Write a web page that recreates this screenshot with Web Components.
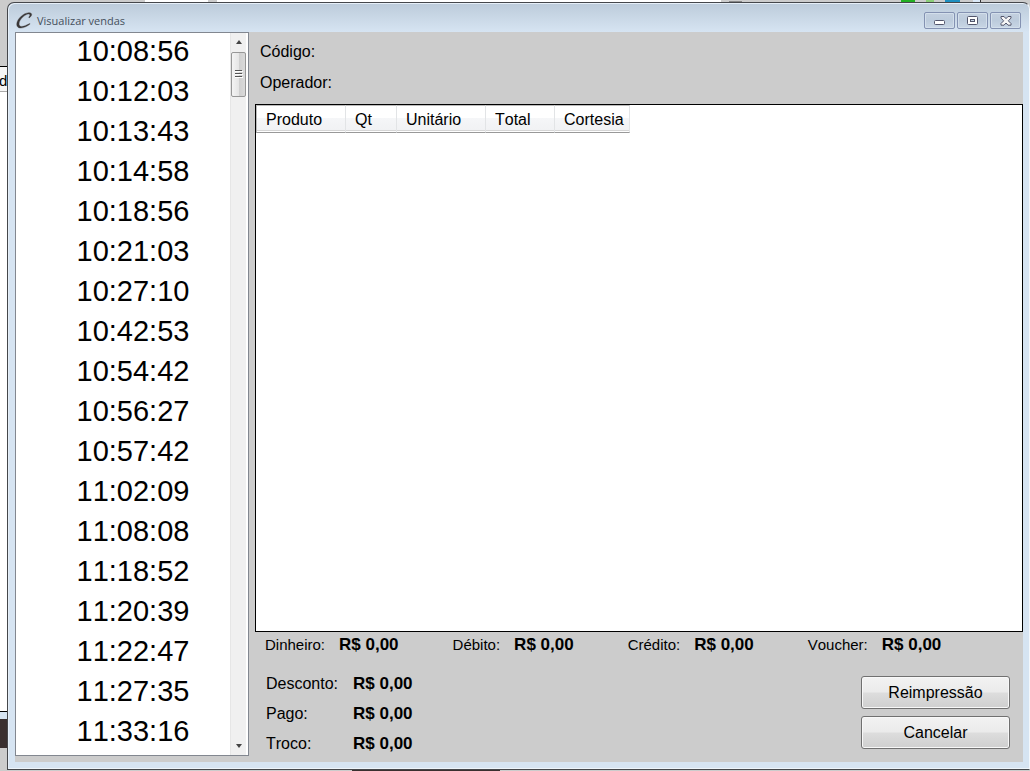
<!DOCTYPE html>
<html lang="pt-BR">
<head>
<meta charset="utf-8">
<title>Visualizar vendas</title>
<style>
html, body { height: 100%; margin: 0; }
body { font-family: "Liberation Sans", Arial, sans-serif; font-size: 16px; font-kerning: none; color: #000; background: #ccc; overflow: hidden; }
</style>
</head>
<body>
<sales-desktop>
  <sales-window caption="Visualizar vendas">
    <time-list slot="side"></time-list>
    <sales-detail></sales-detail>
  </sales-window>
</sales-desktop>
<script>
const define = (name, html, setup) => {
  const template = document.createElement('template');
  template.innerHTML = html;
  customElements.define(name, class extends HTMLElement {
    connectedCallback() {
      if (this.shadowRoot) return;
      const root = this.attachShadow({ mode: 'open' });
      root.append(template.content.cloneNode(true));
      if (setup) setup(this, root);
    }
  });
};

define('sales-desktop', `
<style>
:host { display: grid; grid-template-columns: 7px minmax(0, 1fr); height: 100vh; box-sizing: border-box; padding: 2px 0 1px;
  background:
    linear-gradient(#3a3030, #3a3030) 352px 100% / 148px 1px no-repeat,
    linear-gradient(#fff, #fff) 145px 0 / 63px 2px no-repeat,
    linear-gradient(#fff, #fff) 217px 0 / 504px 2px no-repeat,
    linear-gradient(#888, #888) 729px 1px / 13px 1px no-repeat,
    linear-gradient(#22b022, #22b022) 901px 0 / 14px 2px no-repeat,
    linear-gradient(#8bcf78, #8bcf78) 926px 0 / 8px 2px no-repeat,
    linear-gradient(#1d8fc0, #1d8fc0) 945px 0 / 15px 2px no-repeat,
    linear-gradient(#dbe9f7, #dbe9f7) 973px 0 / 7px 2px no-repeat,
    linear-gradient(#333, #333) 980px 0 / 1px 2px no-repeat,
    #ccc; }
.behind { display: flex; flex-direction: column; overflow: hidden; min-height: 0; }
.top { height: 64px; }
.head { height: 24px; line-height: 27px; border-top: 1px solid #000; border-bottom: 1px solid #aaa; background: #f6f6f6; font-size: 15px; text-indent: -1px; }
.page { flex: 1; background: #fff; border-bottom: 1px solid #000; }
.frame { height: 7px; background: #d6e4f2; }
.dark { height: 29px; background: #3a3030; }
.base { height: 22px; }
</style>
<div class="behind"><div class="top"></div><div class="head">d</div><div class="page"></div><div class="frame"></div><div class="dark"></div><div class="base"></div></div>
<slot></slot>`);

define('sales-window', `
<style>
:host { display: flex; flex-direction: column; min-height: 0; box-sizing: border-box; border: 1px solid #45474b; border-right-color: #f4f8fc; border-radius: 7px 7px 0 0;
  padding: 0 6px 7px 7px; background: linear-gradient(#bccbda, #d6e4f2 29px); box-shadow: inset 1px 1px #e6eff8, inset 0 -1px #eef5fb; }
header { display: flex; align-items: center; height: 29px; flex: none; }
.logo { width: 17px; height: 17px; margin: 5px 4px 0 1px; }
h1 { flex: 1; margin: 6px 0 0; font: 11px "Open Sans", "Noto Sans", sans-serif; line-height: 18px; color: #45505c; }
nav { display: flex; gap: 2px; margin: 6px 2px 0 0; }
nav button { width: 31px; height: 17px; padding: 0; border: 1px solid #8492b2; border-radius: 2px; background: linear-gradient(#c3d0df, #bccbdc 50%, #c8d6e5); box-shadow: inset 0 0 0 1px #d3dfeb; display: grid; place-items: center; }
nav svg { display: block; }
nav button:first-child svg { margin-top: 4px; }
main { flex: 1; min-height: 0; display: grid; grid-template-columns: 234px minmax(0, 1fr); column-gap: 6px; background: #ccc; }
</style>
<header>
<svg class="logo" viewBox="0 0 17 17" fill="#3b3838" stroke="#3b3838" stroke-width=".3"><path d="M12.600 5.200C14.600 3.400 14.200 2 12.200 2.100C9.300 2.300 4 7 3.200 10.800C2.500 14.200 4.800 14.900 7.700 14.100C9.600 13.600 11.300 12.600 13.800 11.400L14.100 12.100C11.600 14.200 8 15.900 5 16.100C1.600 16.200 .2 14 .9 10.800C2 6 7.500 1.200 12.400 .7C16.600 .5 16.800 3.300 13.300 5.900z"/></svg>
<h1></h1>
<nav>
<button aria-label="Minimizar"><svg width="11" height="5" viewBox="0 0 11 5"><rect x=".5" y=".5" width="10" height="4" rx="1" fill="#fff" stroke="#53566c"/></svg></button>
<button aria-label="Maximizar"><svg width="11" height="9" viewBox="0 0 11 9"><rect x=".5" y=".5" width="10" height="8" rx="1" fill="#fff" stroke="#53566c"/><rect x="3.500" y="3.500" width="4" height="2" fill="#c8d6e5" stroke="#53566c"/></svg></button>
<button aria-label="Fechar"><svg width="12" height="10" viewBox="0 0 12 10"><path d="M1 .5h3L6 2.700 8 .5h3v1.700L8.300 4.800 11 7.500v1.700H8L6 7 4 9.200H1V7.500L3.700 4.800 1 2.200z" fill="#f6f6f6" stroke="#53566c"/></svg></button>
</nav>
</header>
<main><slot name="side"></slot><slot></slot></main>`,
(host, root) => { root.querySelector('h1').textContent = host.getAttribute('caption'); });

define('time-list', `
<style>
:host { display: flex; min-height: 0; box-sizing: border-box; margin-bottom: 6px; border: 1px solid #828790; background: #fff; }
ul { flex: 1; margin: 0; padding: 0; list-style: none; overflow: hidden; font-size: 29px; line-height: 36px; }
li { height: 40px; text-align: center; padding-left: 20px; }
.bar { width: 16px; margin-right: 2px; display: flex; flex-direction: column; background: #f0f0f0; border-left: 1px solid #e6e6e6; box-sizing: border-box; }
.bar button { height: 18px; border: 0; padding: 0; background: none; display: grid; place-items: center; }
.track { flex: 1; padding-top: 1px; }
.thumb { height: 45px; box-sizing: border-box; border: 1px solid #979797; border-radius: 2px; background: linear-gradient(90deg, #f4f4f4, #e6e6e6 50%, #cfcfcf 52%, #dadada); display: grid; place-items: center; }
</style>
<ul role="listbox" aria-label="Vendas"></ul>
<div class="bar">
<button aria-label="Subir"><svg width="8" height="5"><path d="M1 4h6L4 0z" fill="#444"/></svg></button>
<div class="track"><div class="thumb"><svg width="8" height="9"><path d="M0 .5h7M0 3.500h7M0 6.500h7" stroke="#555"/><path d="M0 1.500h8M0 4.500h8M0 7.500h8" stroke="#fff"/></svg></div></div>
<button aria-label="Descer"><svg width="8" height="5"><path d="M1 0h6L4 4z" fill="#444"/></svg></button>
</div>`,
(host, root) => {
  const times = ['10:08:56','10:12:03','10:13:43','10:14:58','10:18:56','10:21:03','10:27:10','10:42:53','10:54:42','10:56:27','10:57:42','11:02:09','11:08:08','11:18:52','11:20:39','11:22:47','11:27:35','11:33:16'];
  root.querySelector('ul').innerHTML = times.map(t => `<li role="option">${t}</li>`).join('');
});

define('money-field', `
<style>
:host { display: flex; align-items: baseline; gap: 14px; white-space: nowrap; font-size: 15px; line-height: 26px; }
:host([wide]) { font-size: 16px; line-height: 30px; height: 30px; gap: 0; }
:host([wide]) span { width: 87px; }
b { font-size: 17px; }
</style>
<span><slot></slot></span><b>R$ 0,00</b>`);

define('push-button', `
<style>
:host { display: block; }
button { width: 149px; height: 33px; padding: 0; font: inherit; color: #000; border: 1px solid #707070; border-radius: 3px; background: linear-gradient(#f2f2f2, #ebebeb 49%, #dddddd 51%, #cfcfcf); box-shadow: inset 0 0 0 1px #f8f8f8; }
</style>
<button><slot></slot></button>`);

define('product-table', `
<style>
:host { display: block; min-height: 0; flex: 1; border: 1px solid #000; background: #fff; }
table { border-collapse: separate; border-spacing: 0; table-layout: fixed; width: 374px; }
th { box-sizing: border-box; height: 28px; padding: 2px 0 0 9px; text-align: left; font-weight: normal; border-right: 1px solid #e2e4e6; border-bottom: 1px solid #999; border-top: 1px solid #bbb; background: linear-gradient(#fff, #fff 45%, #f5f6f8 47%, #f0f1f3); box-shadow: inset 0 -1px #fff, inset 0 -2px #d5d5d5; }
th:first-child { border-left: 1px solid #bbb; }
</style>
<table>
<colgroup><col style="width:90px"><col style="width:51px"><col style="width:89px"><col style="width:69px"><col style="width:75px"></colgroup>
<thead><tr><th>Produto</th><th>Qt</th><th>Unitário</th><th>Total</th><th>Cortesia</th></tr></thead>
<tbody></tbody>
</table>`);

define('sales-detail', `
<style>
:host { display: flex; flex-direction: column; min-height: 0; }
dl { margin: 0; padding: 4px 5px 6px; }
dl div { height: 31px; line-height: 31px; }
dt { display: inline; } dd { display: inline; margin: 0 0 0 8px; }
.payments { display: flex; gap: 54px; height: 26px; padding-left: 10px; }
.summary { display: flex; justify-content: space-between; padding: 11px 13px 3px 11px; }
.actions { display: flex; flex-direction: column; gap: 7px; padding-top: 7px; }
</style>
<dl><div><dt>Código:</dt><dd></dd></div><div><dt>Operador:</dt><dd></dd></div></dl>
<product-table></product-table>
<section class="payments"><money-field>Dinheiro:</money-field><money-field>Débito:</money-field><money-field>Crédito:</money-field><money-field>Voucher:</money-field></section>
<section class="summary">
<div><money-field wide>Desconto:</money-field><money-field wide>Pago:</money-field><money-field wide>Troco:</money-field></div>
<div class="actions"><push-button>Reimpressão</push-button><push-button>Cancelar</push-button></div>
</section>`);
</script>
</body>
</html>
